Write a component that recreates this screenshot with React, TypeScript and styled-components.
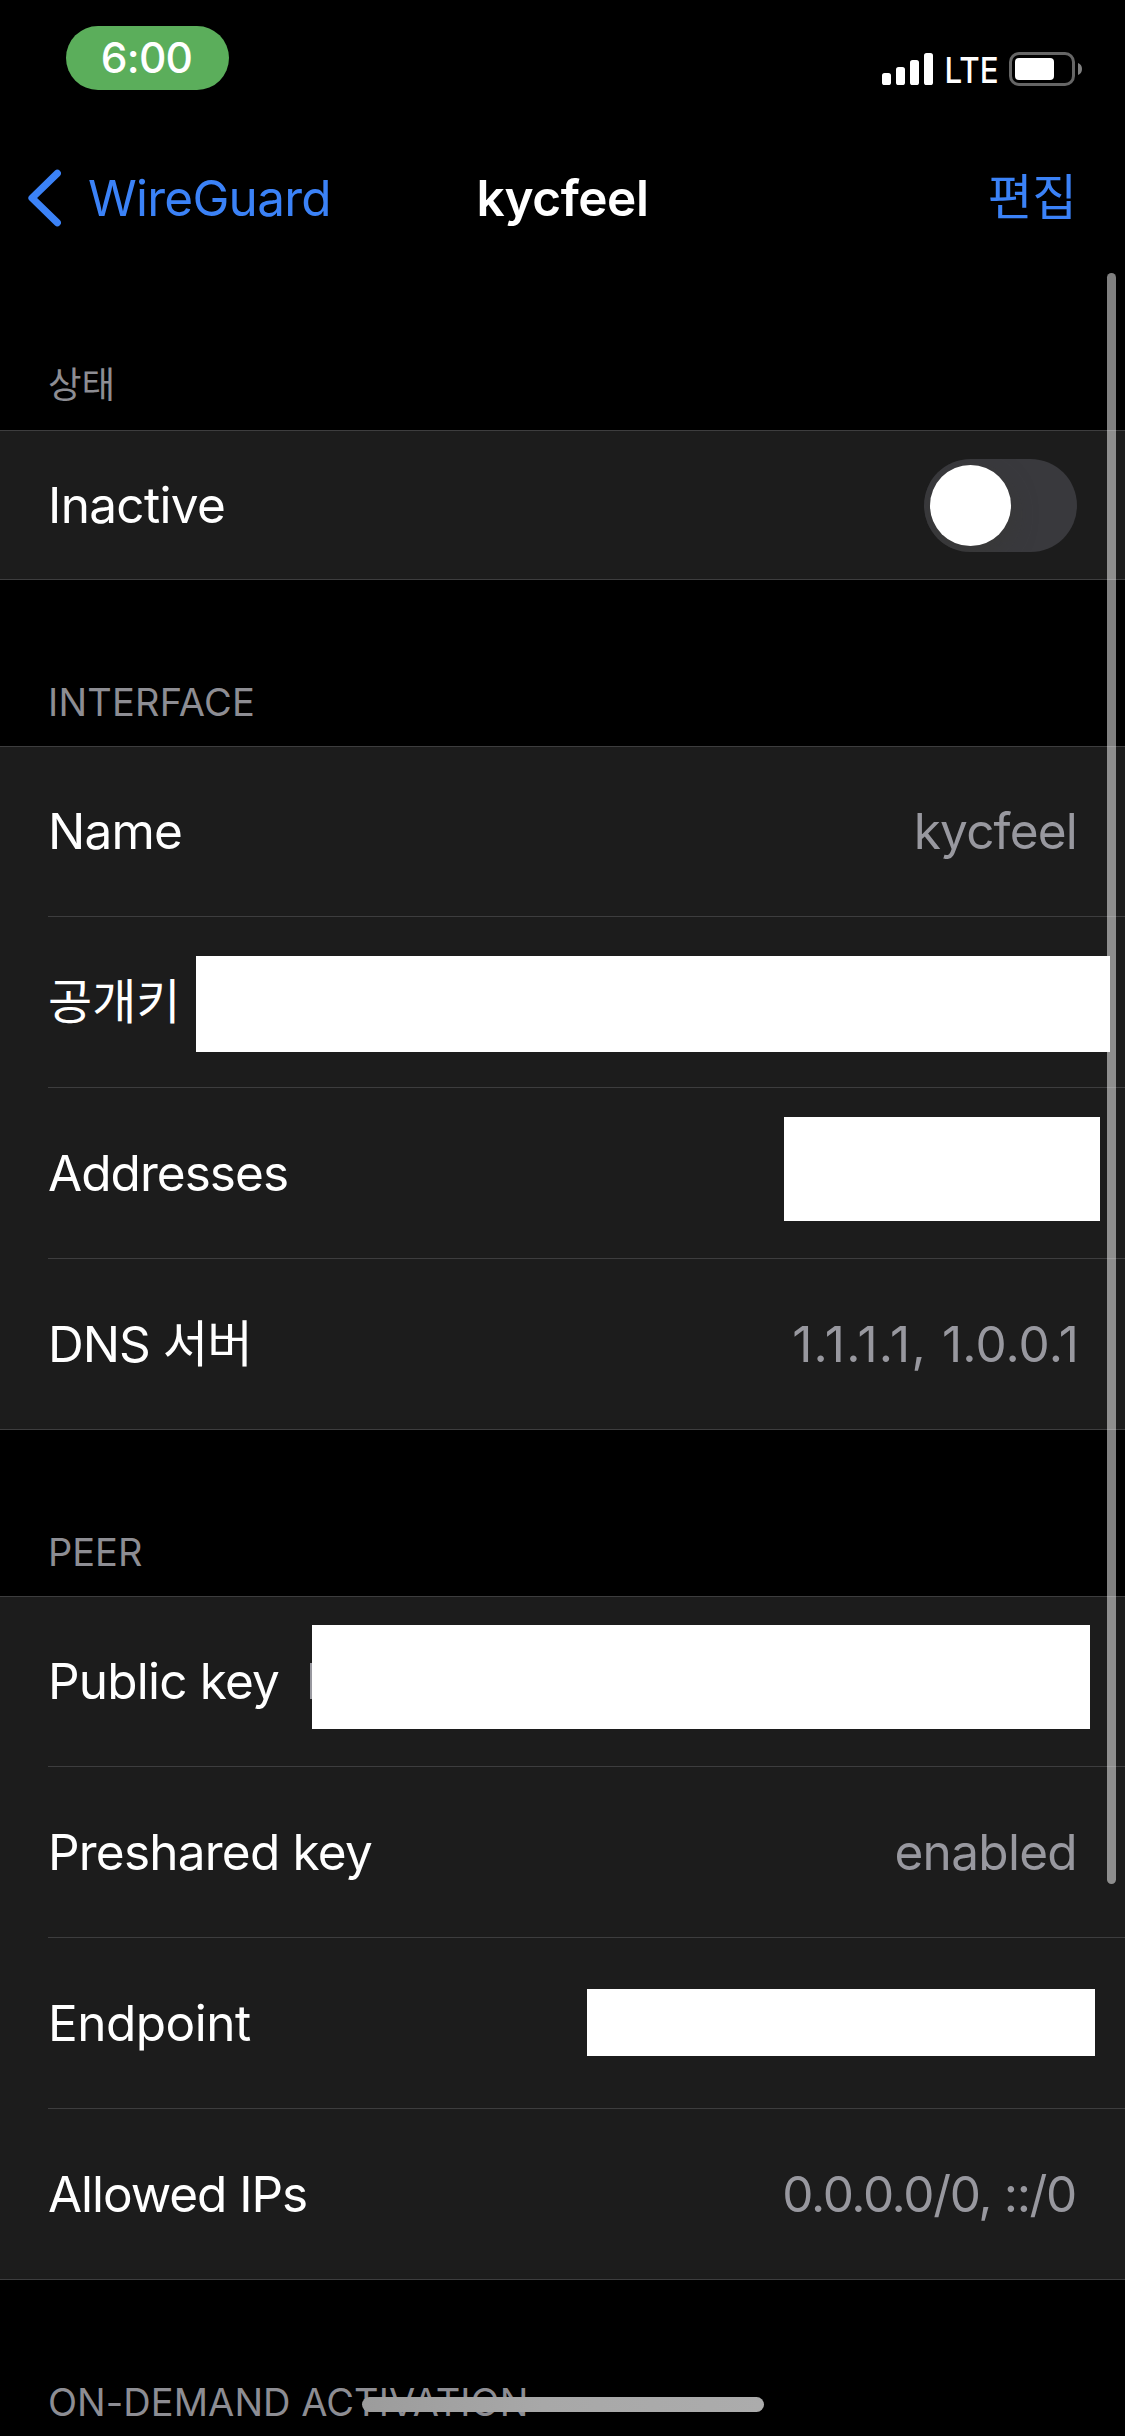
import React from 'react';
import styled, { createGlobalStyle, css } from 'styled-components';

const color = {
  page: '#000000',
  group: '#1c1c1c',
  line: '#3d3d3e',
  accent: '#3b82f7',
  label: '#ffffff',
  value: '#98989f',
  caption: '#8d8d93',
};

const GlobalStyle = createGlobalStyle`
  * { box-sizing: border-box; }
  body {
    margin: 0;
    background: ${color.page};
    color: ${color.label};
    font-family: Inter, 'Noto Sans CJK KR', sans-serif;
  }
`;

const Screen = styled.main`
  position: relative;
  width: 1125px;
  height: 2436px;
  overflow: hidden;
  background: ${color.page};
`;

const StatusBar = styled.header`
  display: flex;
  justify-content: space-between;
  align-items: flex-start;
  height: 132px;
  padding: 26px 43px 0 66px;
`;

const TimePill = styled.div`
  display: flex;
  align-items: center;
  justify-content: center;
  width: 163px;
  height: 64px;
  padding-right: 2px;
  border-radius: 32px;
  background: #5bae5b;
  font-size: 42.5px;
  font-weight: 500;
  line-height: 64px;
  letter-spacing: -0.7px;
`;

const Indicators = styled.div`
  display: flex;
  align-items: center;
  height: 34px;
  margin-top: 26px;

  svg {
    display: block;
  }
`;

const Network = styled.span`
  display: flex;
  justify-content: center;
  width: 75px;
  padding-top: 2px;
  font-size: 36px;
  font-weight: 500;
  line-height: 34px;
  transform: scaleX(0.87);
`;

const NavBar = styled.nav`
  display: grid;
  grid-template-columns: 1fr auto 1fr;
  align-items: center;
  height: 132px;
  padding: 0 48px;
  font-size: 49.5px;
  line-height: 60px;
`;

const BackButton = styled.a`
  display: flex;
  align-items: center;
  gap: 27px;
  margin-left: -20px;
  color: ${color.accent};
  letter-spacing: -0.75px;

  svg {
    display: block;
  }
`;

const Title = styled.h1`
  margin: 0;
  font-size: inherit;
  font-weight: 600;
  letter-spacing: -0.45px;
`;

const EditButton = styled.a`
  justify-self: end;
  color: ${color.accent};
  font-size: 48.5px;
`;

const SectionTitle = styled.h2<{ $size?: number; $track?: number; $drop?: number }>`
  display: flex;
  align-items: flex-end;
  height: 166px;
  margin: 0;
  padding: 0 48px ${p => p.$drop ?? 21}px;
  color: ${color.caption};
  font-size: ${p => p.$size ?? 38}px;
  font-weight: 400;
  line-height: 46px;
  letter-spacing: ${p => p.$track ?? 0}px;
`;

const Group = styled.section`
  background: ${color.group};
  box-shadow: inset 0 1px 0 ${color.line};
`;

const Row = styled.div<{ $height?: number }>`
  position: relative;
  display: flex;
  align-items: center;
  justify-content: space-between;
  height: ${p => p.$height ?? 171}px;
  margin-left: 48px;
  padding-right: 48px;
  border-bottom: 1px solid ${color.line};

  &:last-child {
    margin-left: 0;
    padding-left: 48px;
  }
`;

const text = css<{ $track?: number; $size?: number }>`
  font-size: ${p => p.$size ?? 49.5}px;
  line-height: 60px;
  letter-spacing: ${p => p.$track ?? -0.8}px;
  white-space: nowrap;
`;

const Label = styled.span<{ $track?: number; $size?: number }>`
  ${text}
`;

const Value = styled.span<{ $track?: number; $size?: number; $shift?: number }>`
  ${text}
  margin-right: ${p => p.$shift ?? 0}px;
  color: ${color.value};
`;

const Address = styled.span<{ $track: number }>`
  letter-spacing: ${p => p.$track}px;
`;

const Mask = styled.div<{ $top: number; $right: number; $width: number; $height: number }>`
  position: absolute;
  z-index: 2;
  top: ${p => p.$top}px;
  right: ${p => p.$right}px;
  width: ${p => p.$width}px;
  height: ${p => p.$height}px;
  background: #ffffff;
`;

const KeyEdge = styled.span`
  width: 5px;
  height: 36px;
  margin: 0 auto 0 31px;
  background: ${color.value};
`;

const Toggle = styled.div`
  display: flex;
  align-items: center;
  width: 153px;
  height: 93px;
  margin-top: 2px;
  padding: 6px;
  border-radius: 46.5px;
  background: #39393d;
  overflow: hidden;
`;

const Knob = styled.div`
  width: 81px;
  height: 81px;
  border-radius: 50%;
  background: #ffffff;
  box-shadow: 0 9px 24px rgba(56, 56, 54, 0.8);
`;

const ScrollThumb = styled.div`
  position: absolute;
  z-index: 1;
  top: 273px;
  right: 9px;
  width: 9px;
  height: 1611px;
  border-radius: 4.5px;
  background: rgba(255, 255, 255, 0.5);
`;

const HomeIndicator = styled.div`
  position: absolute;
  z-index: 3;
  left: 362px;
  bottom: 24px;
  width: 402px;
  height: 15px;
  border-radius: 7.5px;
  background: linear-gradient(90deg, #9c9c9c, #a8a8a8 45%, #acacac);
`;

const SignalIcon = () => (
  <svg width="52" height="34" viewBox="0 0 52 34" fill="#fff">
    <rect x="0" y="21" width="9" height="12" rx="2.6" />
    <rect x="14" y="15" width="9" height="18" rx="2.6" />
    <rect x="28" y="8" width="9" height="25" rx="2.6" />
    <rect x="42" y="1" width="9" height="32" rx="2.6" />
  </svg>
);

const BatteryIcon = () => (
  <svg width="73" height="34" viewBox="0 0 73 34">
    <rect x="1.5" y="1.5" width="63" height="31" rx="8.5" fill="none" stroke="#666" strokeWidth="3" />
    <rect x="6" y="6" width="39" height="22" rx="4" fill="#fff" />
    <path d="M69 11c2.6 1 4 3.300 4 6s-1.400 5-4 6z" fill="#808080" />
  </svg>
);

const BackIcon = () => (
  <svg width="33" height="58" viewBox="0 0 33 58" fill="none">
    <path d="M29.300 4.300 4 29l25.300 24.700" stroke={color.accent} strokeWidth="7.2" strokeLinecap="round" strokeLinejoin="round" />
  </svg>
);

export default function App() {
  return (
    <Screen>
      <GlobalStyle />
      <StatusBar>
        <TimePill>6:00</TimePill>
        <Indicators>
          <SignalIcon />
          <Network>LTE</Network>
          <BatteryIcon />
        </Indicators>
      </StatusBar>

      <NavBar>
        <BackButton>
          <BackIcon />
          WireGuard
        </BackButton>
        <Title>kycfeel</Title>
        <EditButton>편집</EditButton>
      </NavBar>

      <SectionTitle $size={36.5} $drop={22}>상태</SectionTitle>
      <Group>
        <Row $height={150}>
          <Label $track={-0.66}>Inactive</Label>
          <Toggle role="switch" aria-checked={false}>
            <Knob />
          </Toggle>
        </Row>
      </Group>

      <SectionTitle $track={0.2}>INTERFACE</SectionTitle>
      <Group>
        <Row>
          <Label>Name</Label>
          <Value>kycfeel</Value>
        </Row>
        <Row>
          <Label $size={48} $track={0}>공개키</Label>
          <Mask $top={39} $right={15} $width={914} $height={96} />
        </Row>
        <Row>
          <Label $track={-0.95}>Addresses</Label>
          <Mask $top={29} $right={25} $width={316} $height={104} />
        </Row>
        <Row>
          <Label $track={-1}>DNS 서버</Label>
          <Value $shift={-2}>
            <Address $track={1.25}>1.1.1.1, </Address>
            <Address $track={0.1}>1.0.0.1</Address>
          </Value>
        </Row>
      </Group>

      <SectionTitle>PEER</SectionTitle>
      <Group>
        <Row>
          <Label>Public key</Label>
          <KeyEdge />
          <Mask $top={29} $right={35} $width={778} $height={104} />
        </Row>
        <Row>
          <Label $track={-0.78}>Preshared key</Label>
          <Value $track={-0.68}>enabled</Value>
        </Row>
        <Row>
          <Label $track={-0.5}>Endpoint</Label>
          <Mask $top={51} $right={30} $width={508} $height={67} />
        </Row>
        <Row>
          <Label $track={-1.05}>Allowed IPs</Label>
          <Value $track={-1.34} $shift={1}>0.0.0.0/0, ::/0</Value>
        </Row>
      </Group>

      <SectionTitle $track={0.06}>ON-DEMAND ACTIVATION</SectionTitle>

      <ScrollThumb />
      <HomeIndicator />
    </Screen>
  );
}
